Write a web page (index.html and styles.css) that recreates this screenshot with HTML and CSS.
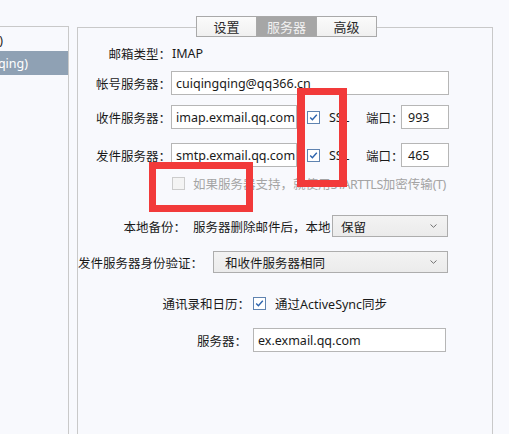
FILE: index.html
```html
<!DOCTYPE html>
<html lang="zh-CN">
<head>
<meta charset="utf-8">
<title>服务器</title>
<link rel="stylesheet" href="styles.css">
</head>
<body>
<div class="page">
  <div class="accounts">
    <div class="acct acct-a"><span>收件箱 (0)</span></div>
    <div class="acct acct-b sel"><span>(cuiqingqing)</span></div>
  </div>
  <div class="group">
    <div class="tabs">
      <div class="tab">设置</div>
      <div class="tab on">服务器</div>
      <div class="tab">高级</div>
    </div>

    <div class="row r1">
      <span class="lab w-main">邮箱类型：</span>
      <span class="val">IMAP</span>
    </div>

    <div class="row r2">
      <span class="lab w-main">帐号服务器：</span>
      <div class="input in-account">cuiqingqing@qq366.cn</div>
    </div>

    <div class="row r3">
      <span class="lab w-main">收件服务器：</span>
      <div class="input in-host">imap.exmail.qq.com</div>
      <span class="cb checked ssl-cb"><svg viewBox="0 0 11 11" width="11" height="11"><path d="M2.2 5.6 L4.4 7.8 L8.8 2.8" fill="none" stroke="#2c63ad" stroke-width="1.4"/></svg></span>
      <span class="ssl">SSL</span>
      <span class="port-lab">端口：</span>
      <div class="input in-port">993</div>
    </div>

    <div class="row r4">
      <span class="lab w-main">发件服务器：</span>
      <div class="input in-host">smtp.exmail.qq.com</div>
      <span class="cb checked ssl-cb"><svg viewBox="0 0 11 11" width="11" height="11"><path d="M2.2 5.6 L4.4 7.8 L8.8 2.8" fill="none" stroke="#2c63ad" stroke-width="1.4"/></svg></span>
      <span class="ssl">SSL</span>
      <span class="port-lab">端口：</span>
      <div class="input in-port">465</div>
    </div>

    <div class="row r5">
      <span class="spacer-tls"></span>
      <span class="cb disabled"></span>
      <span class="tls-text">如果服务器支持，就使用<span class="latin-narrow">STARTTLS</span>加密传输<span class="latin-narrow">(T)</span></span>
    </div>

    <div class="row r6">
      <span class="lab w-backup">本地备份：</span>
      <span class="desc">服务器删除邮件后，本地</span>
      <div class="select sel-backup"><span>保留</span><svg class="chev" viewBox="0 0 7 4" width="7" height="4"><path d="M0.5 0.5 L3.5 3.3 L6.5 0.5" fill="none" stroke="#707070" stroke-width="1"/></svg></div>
    </div>

    <div class="row r7">
      <span class="lab w-auth">发件服务器身份验证：</span>
      <div class="select sel-auth"><span>和收件服务器相同</span><svg class="chev" viewBox="0 0 7 4" width="7" height="4"><path d="M0.5 0.5 L3.5 3.3 L6.5 0.5" fill="none" stroke="#707070" stroke-width="1"/></svg></div>
    </div>

    <div class="row r8">
      <span class="lab w-sync">通讯录和日历：</span>
      <span class="cb checked sync-cb"><svg viewBox="0 0 11 11" width="11" height="11"><path d="M2.2 5.6 L4.4 7.8 L8.8 2.8" fill="none" stroke="#2c63ad" stroke-width="1.4"/></svg></span>
      <span class="sync-text">通过ActiveSync同步</span>
    </div>

    <div class="row r9">
      <span class="lab w-ex">服务器：</span>
      <div class="input in-ex">ex.exmail.qq.com</div>
    </div>
  </div>
</div>
<div class="mark mark1"></div>
<div class="mark mark2"></div>
</body>
</html>
```
FILE: styles.css
```css
html, body {
  margin: 0;
  padding: 0;
}
body {
  background: #f8f9fd;
  font-family: "Noto Sans", "Noto Sans CJK SC", sans-serif;
  font-size: 12.5px;
  color: #1a1a1a;
  overflow: hidden;
  width: 509px;
  height: 434px;
  position: relative;
}
.page {
  display: flex;
  align-items: flex-start;
  height: 434px;
}

/* left account list */
.accounts {
  width: 68px;
  height: 420px;
  margin-top: 26px;
  border-top: 1px solid #c9c9c9;
  border-right: 1px solid #c9c9c9;
  overflow: hidden;
}
.acct {
  height: 24px;
  display: flex;
  align-items: center;
  justify-content: flex-end;
  white-space: nowrap;
  overflow: hidden;
}
.acct-a {
  padding-right: 65px;
  color: #1e1e1e;
}
.acct-b {
  padding-right: 40px;
}
.acct.sel {
  background: #8fa1b4;
  color: #ffffff;
}

/* group box */
.group {
  margin-left: 8px;
  margin-top: 27px;
  width: 414px;
  height: 420px;
  border: 1px solid #c9c9c9;
}
.tabs {
  display: flex;
  width: max-content;
  margin-top: -12px;
  margin-left: 118px;
  border: 1px solid #a9a9a9;
  background: #f7f7f7;
}
.tab {
  width: 59px;
  height: 19px;
  display: flex;
  align-items: center;
  justify-content: center;
  color: #2a2a2a;
  font-size: 13px;
  background: linear-gradient(#fbfbfb, #f0f0f0);
}
.tab + .tab {
  border-left: 1px solid #a9a9a9;
}
.tab.on {
  background: #a6a6a6;
  color: #f1f1f1;
}

/* rows */
.row {
  display: flex;
  align-items: center;
  white-space: nowrap;
}
.lab {
  text-align: right;
  flex: none;
}
.w-main { width: 93px; }
.w-backup { width: 108px; }
.w-auth { width: 125px; }
.w-sync { width: 172px; }
.w-ex { width: 169px; }

.r1 { margin-top: 6px; height: 20px; }
.r2 { margin-top: 8px; height: 24px; }
.r3 { margin-top: 10px; height: 24px; }
.r4 { margin-top: 14px; height: 24px; }
.r5 { margin-top: 6px; height: 20px; }
.r6 { margin-top: 22px; height: 22px; }
.r7 { margin-top: 14px; height: 22px; }
.r8 { margin-top: 20px; height: 20px; }
.r9 { margin-top: 15px; height: 24px; }

.val {
  padding-left: 1px;
}

.input {
  box-sizing: border-box;
  height: 24px;
  border: 1px solid #b6b6b6;
  background: #ffffff;
  padding: 0 4px;
  display: flex;
  align-items: center;
  overflow: hidden;
  flex: none;
}
.in-account { width: 278px; }
.in-host { width: 126px; }
.in-port { width: 48px; padding-left: 6px; }
.in-ex { width: 193px; margin-left: 6px; }

.cb {
  box-sizing: border-box;
  width: 13px;
  height: 13px;
  border: 1px solid #5f83b0;
  background: #ffffff;
  display: flex;
  align-items: center;
  justify-content: center;
  flex: none;
}
.cb.disabled {
  border-color: #cccccc;
  background: #f4f4f4;
}
.ssl-cb { margin-left: 10px; }
.ssl {
  width: 37px;
  margin-left: 9px;
  flex: none;
}
.port-lab {
  width: 35px;
  flex: none;
}
.spacer-tls {
  width: 94px;
  flex: none;
}
.tls-text {
  margin-left: 8px;
  color: #a4a4a4;
}
.latin-narrow {
  letter-spacing: -0.5px;
}

.desc {
  width: 139px;
  margin-left: 7px;
  flex: none;
}
.select {
  box-sizing: border-box;
  height: 22px;
  border: 1px solid #adadad;
  background: linear-gradient(#f3f3f3, #ebebeb);
  display: flex;
  align-items: center;
  justify-content: space-between;
  padding: 0 10px 0 8px;
  flex: none;
}
.sel-backup { width: 116px; }
.sel-auth { width: 235px; margin-left: 10px; padding-left: 11px; }
.chev { display: block; }

.sync-cb { margin-left: 3px; }
.sync-text { margin-left: 9px; }

/* red annotation boxes drawn over the screenshot */
.mark {
  position: absolute;
  box-sizing: border-box;
  border-color: #f23a3a;
  border-style: solid;
}
.mark1 {
  left: 297px;
  top: 88px;
  width: 50px;
  height: 99px;
  border-width: 7px 8px;
}
.mark2 {
  left: 149px;
  top: 162px;
  width: 104px;
  height: 50px;
  border-width: 7px;
}
```
